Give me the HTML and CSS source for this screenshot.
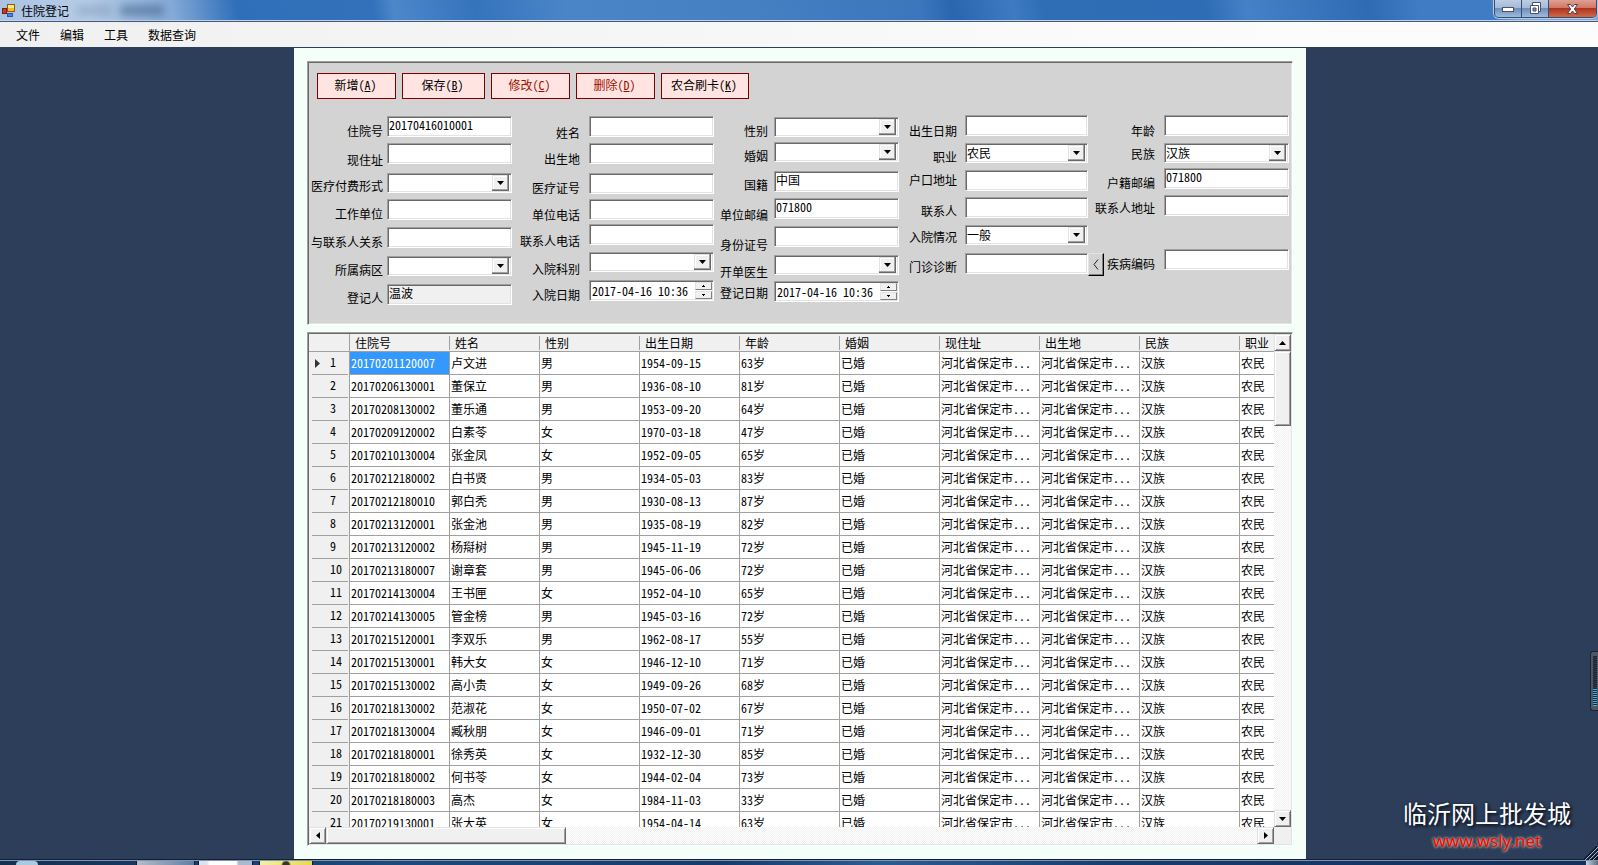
FILE: index.html
```html
<!DOCTYPE html>
<html lang="zh-CN">
<head>
<meta charset="utf-8">
<title>住院登记</title>
<link rel="stylesheet" href="styles.css">
</head>
<body>
<header class="titlebar">
  <svg class="app-icon" width="14" height="14" viewBox="0 0 14 14" aria-hidden="true">
    <rect x="5.500" y="0.500" width="7" height="7" fill="#f7b924" stroke="#8d5b0c"/>
    <path d="M6 1h6v3H6z" fill="#fde08a"/>
    <rect x="0.500" y="4.500" width="4" height="5" fill="#c93a22" stroke="#7d1c10"/>
    <rect x="5.500" y="9.500" width="5" height="3" fill="#4f83dc" stroke="#2a56a8"/>
  </svg>
  <h1 class="title">住院登记</h1>
  <span class="ghost ghost-a"></span><span class="ghost ghost-b"></span>
  <div class="window-buttons">
    <button class="win" aria-label="最小化"><svg width="14" height="8" viewBox="0 0 14 8"><rect x="1.500" y="2.500" width="11" height="4" fill="#fff" stroke="#4b5468"/></svg></button>
    <button class="win" aria-label="还原"><svg width="13" height="13" viewBox="0 0 13 13"><path d="M3.500 .5h8v9h-8z" fill="#fff" stroke="#4b5468"/><path d="M1.500 3.500h8v8h-8z" fill="#fff" stroke="#4b5468"/><path d="M4 6h3v3H4z" fill="#6f8fb8" stroke="#4b5468"/></svg></button>
    <button class="win close" aria-label="关闭"><svg width="13" height="12" viewBox="0 0 13 12"><path d="M1.500 1.500h3l2 2.500 2-2.500h3L8.300 6l3.200 4.500h-3l-2-2.500-2 2.500h-3L4.700 6z" fill="#fff" stroke="#4b4450"/></svg></button>
  </div>
</header>
<nav class="menubar">
  <button>文件</button><button>编辑</button><button>工具</button><button>数据查询</button>
</nav>
<main class="workarea">
  <div class="page">
    <form class="panel">
      <div class="actions">
        <button type="button" class="act">新增(<u>A</u>)</button>
        <button type="button" class="act wide">保存(<u>B</u>)</button>
        <button type="button" class="act" disabled>修改(<u>C</u>)</button>
        <button type="button" class="act" disabled>删除(<u>D</u>)</button>
        <button type="button" class="act wider">农合刷卡(<u>K</u>)</button>
      </div>
      <div class="fields">
        <div class="labels l1">
          <label for="a1">住院号</label><label for="a2">现住址</label><label for="a3">医疗付费形式</label><label for="a4">工作单位</label><label for="a5">与联系人关系</label><label for="a6">所属病区</label><label for="a7">登记人</label>
        </div>
        <div class="controls c1">
          <input id="a1" value="20170416010001"><input id="a2"><select id="a3"><option></option></select><input id="a4"><input id="a5"><select id="a6"><option></option></select><input id="a7" value="温波" readonly>
        </div>
        <div class="labels l2">
          <label for="b1">姓名</label><label for="b2">出生地</label><label for="b3">医疗证号</label><label for="b4">单位电话</label><label for="b5">联系人电话</label><label for="b6">入院科别</label><label for="b7">入院日期</label>
        </div>
        <div class="controls c2">
          <input id="b1"><input id="b2"><input id="b3"><input id="b4"><input id="b5"><select id="b6"><option></option></select>
          <div class="spin"><input id="b7" value="2017-04-16 10:36"><div class="spin-buttons"><button type="button" class="up" aria-label="增加"></button><button type="button" class="down" aria-label="减少"></button></div></div>
        </div>
        <div class="labels l3">
          <label for="c1">性别</label><label for="c2">婚姻</label><label for="c3">国籍</label><label for="c4">单位邮编</label><label for="c5">身份证号</label><label for="c6">开单医生</label><label for="c7">登记日期</label>
        </div>
        <div class="controls c3">
          <select id="c1"><option></option></select><select id="c2"><option></option></select><input id="c3" value="中国"><input id="c4" value="071800"><input id="c5"><select id="c6"><option></option></select>
          <div class="spin"><input id="c7" value="2017-04-16 10:36"><div class="spin-buttons"><button type="button" class="up" aria-label="增加"></button><button type="button" class="down" aria-label="减少"></button></div></div>
        </div>
        <div class="labels l4">
          <label for="d1">出生日期</label><label for="d2">职业</label><label for="d3">户口地址</label><label for="d4">联系人</label><label for="d5">入院情况</label><label for="d6">门诊诊断</label>
        </div>
        <div class="controls c4">
          <input id="d1"><select id="d2"><option>农民</option></select><input id="d3"><input id="d4"><select id="d5"><option>一般</option></select>
          <div class="lookup"><input id="d6"><button type="button" aria-label="选择诊断"><svg width="6" height="11" viewBox="0 0 6 11"><path d="M5 .5l-4 5 4 5" fill="none" stroke="#222"/></svg></button></div>
        </div>
        <div class="labels l5">
          <label for="e1">年龄</label><label for="e2">民族</label><label for="e3">户籍邮编</label><label for="e4">联系人地址</label><label for="e5">疾病编码</label>
        </div>
        <div class="controls c5">
          <input id="e1"><select id="e2"><option>汉族</option></select><input id="e3" value="071800"><input id="e4"><input id="e5">
        </div>
      </div>
    </form>
    <section class="grid">
      <div class="viewport">
        <table>
          <colgroup><col class="w-head"><col class="w"><col class="w-name"><col class="w"><col class="w"><col class="w"><col class="w"><col class="w"><col class="w"><col class="w"><col class="w"></colgroup>
          <thead><tr><th></th><th><span>住院号</span></th><th><span>姓名</span></th><th><span>性别</span></th><th><span>出生日期</span></th><th><span>年龄</span></th><th><span>婚姻</span></th><th><span>现住址</span></th><th><span>出生地</span></th><th><span>民族</span></th><th><span>职业</span></th></tr></thead>
          <tbody>
<tr class="current"><th>1</th><td>20170201120007</td><td>卢文进</td><td>男</td><td>1954-09-15</td><td>63岁</td><td>已婚</td><td>河北省保定市...</td><td>河北省保定市...</td><td>汉族</td><td>农民</td></tr>
<tr><th>2</th><td>20170206130001</td><td>董保立</td><td>男</td><td>1936-08-10</td><td>81岁</td><td>已婚</td><td>河北省保定市...</td><td>河北省保定市...</td><td>汉族</td><td>农民</td></tr>
<tr><th>3</th><td>20170208130002</td><td>董乐通</td><td>男</td><td>1953-09-20</td><td>64岁</td><td>已婚</td><td>河北省保定市...</td><td>河北省保定市...</td><td>汉族</td><td>农民</td></tr>
<tr><th>4</th><td>20170209120002</td><td>白素苓</td><td>女</td><td>1970-03-18</td><td>47岁</td><td>已婚</td><td>河北省保定市...</td><td>河北省保定市...</td><td>汉族</td><td>农民</td></tr>
<tr><th>5</th><td>20170210130004</td><td>张金凤</td><td>女</td><td>1952-09-05</td><td>65岁</td><td>已婚</td><td>河北省保定市...</td><td>河北省保定市...</td><td>汉族</td><td>农民</td></tr>
<tr><th>6</th><td>20170212180002</td><td>白书贤</td><td>男</td><td>1934-05-03</td><td>83岁</td><td>已婚</td><td>河北省保定市...</td><td>河北省保定市...</td><td>汉族</td><td>农民</td></tr>
<tr><th>7</th><td>20170212180010</td><td>郭白秃</td><td>男</td><td>1930-08-13</td><td>87岁</td><td>已婚</td><td>河北省保定市...</td><td>河北省保定市...</td><td>汉族</td><td>农民</td></tr>
<tr><th>8</th><td>20170213120001</td><td>张金池</td><td>男</td><td>1935-08-19</td><td>82岁</td><td>已婚</td><td>河北省保定市...</td><td>河北省保定市...</td><td>汉族</td><td>农民</td></tr>
<tr><th>9</th><td>20170213120002</td><td>杨搿树</td><td>男</td><td>1945-11-19</td><td>72岁</td><td>已婚</td><td>河北省保定市...</td><td>河北省保定市...</td><td>汉族</td><td>农民</td></tr>
<tr><th>10</th><td>20170213180007</td><td>谢章套</td><td>男</td><td>1945-06-06</td><td>72岁</td><td>已婚</td><td>河北省保定市...</td><td>河北省保定市...</td><td>汉族</td><td>农民</td></tr>
<tr><th>11</th><td>20170214130004</td><td>王书匣</td><td>女</td><td>1952-04-10</td><td>65岁</td><td>已婚</td><td>河北省保定市...</td><td>河北省保定市...</td><td>汉族</td><td>农民</td></tr>
<tr><th>12</th><td>20170214130005</td><td>管金榜</td><td>男</td><td>1945-03-16</td><td>72岁</td><td>已婚</td><td>河北省保定市...</td><td>河北省保定市...</td><td>汉族</td><td>农民</td></tr>
<tr><th>13</th><td>20170215120001</td><td>李双乐</td><td>男</td><td>1962-08-17</td><td>55岁</td><td>已婚</td><td>河北省保定市...</td><td>河北省保定市...</td><td>汉族</td><td>农民</td></tr>
<tr><th>14</th><td>20170215130001</td><td>韩大女</td><td>女</td><td>1946-12-10</td><td>71岁</td><td>已婚</td><td>河北省保定市...</td><td>河北省保定市...</td><td>汉族</td><td>农民</td></tr>
<tr><th>15</th><td>20170215130002</td><td>高小贵</td><td>女</td><td>1949-09-26</td><td>68岁</td><td>已婚</td><td>河北省保定市...</td><td>河北省保定市...</td><td>汉族</td><td>农民</td></tr>
<tr><th>16</th><td>20170218130002</td><td>范淑花</td><td>女</td><td>1950-07-02</td><td>67岁</td><td>已婚</td><td>河北省保定市...</td><td>河北省保定市...</td><td>汉族</td><td>农民</td></tr>
<tr><th>17</th><td>20170218130004</td><td>臧秋朋</td><td>女</td><td>1946-09-01</td><td>71岁</td><td>已婚</td><td>河北省保定市...</td><td>河北省保定市...</td><td>汉族</td><td>农民</td></tr>
<tr><th>18</th><td>20170218180001</td><td>徐秀英</td><td>女</td><td>1932-12-30</td><td>85岁</td><td>已婚</td><td>河北省保定市...</td><td>河北省保定市...</td><td>汉族</td><td>农民</td></tr>
<tr><th>19</th><td>20170218180002</td><td>何书苓</td><td>女</td><td>1944-02-04</td><td>73岁</td><td>已婚</td><td>河北省保定市...</td><td>河北省保定市...</td><td>汉族</td><td>农民</td></tr>
<tr><th>20</th><td>20170218180003</td><td>高杰</td><td>女</td><td>1984-11-03</td><td>33岁</td><td>已婚</td><td>河北省保定市...</td><td>河北省保定市...</td><td>汉族</td><td>农民</td></tr>
<tr><th>21</th><td>20170219130001</td><td>张大英</td><td>女</td><td>1954-04-14</td><td>63岁</td><td>已婚</td><td>河北省保定市...</td><td>河北省保定市...</td><td>汉族</td><td>农民</td></tr>
          </tbody>
        </table>
      </div>
      <div class="scroll vertical">
        <button class="arrow" aria-label="向上"><svg width="7" height="4" viewBox="0 0 7 4"><path d="M0 4L3.500 0 7 4z"/></svg></button>
        <div class="thumb"></div>
        <button class="arrow last" aria-label="向下"><svg width="7" height="4" viewBox="0 0 7 4"><path d="M0 0L3.500 4 7 0z"/></svg></button>
      </div>
      <div class="scroll horizontal">
        <button class="arrow" aria-label="向左"><svg width="4" height="7" viewBox="0 0 4 7"><path d="M4 0L0 3.500 4 7z"/></svg></button>
        <div class="thumb"></div>
        <button class="arrow last" aria-label="向右"><svg width="4" height="7" viewBox="0 0 4 7"><path d="M0 0L4 3.500 0 7z"/></svg></button>
      </div>
      <div class="corner"></div>
    </section>
  </div>
</main>
<footer class="taskbar">
  <span class="orb"></span><span class="task"></span><span class="task light"></span><span class="task yellow"></span><span class="desk"></span>
</footer>
<div class="gauge"><span></span></div>
<div class="watermark">
  <p class="mark-name">临沂网上批发城</p>
  <p class="mark-url">www.wsly.net</p>
</div>
<svg class="grip" width="14" height="14" viewBox="0 0 14 14" aria-hidden="true"><path d="M0 14L14 0M4 14L14 4M8 14L14 8M11 14l3-3" stroke="#10182a" stroke-width="2"/><path d="M1 14L14 1M5 14l9-9M9 14l5-5" stroke="#9fb0cc"/></svg>
</body>
</html>
```
FILE: styles.css
```css
* { box-sizing: border-box; }

body {
  margin: 0;
  height: 100vh;
  display: flex;
  flex-direction: column;
  overflow: hidden;
  background: #2d3e5a;
  color: #000;
  font: 12px/16px "Noto Sans Mono CJK SC", "Noto Sans CJK SC", sans-serif;
}

button, input, select {
  font: inherit;
  color: inherit;
  margin: 0;
  padding: 0;
  border-radius: 0;
}

/* Window frame */
.titlebar {
  flex: none;
  position: relative;
  display: flex;
  align-items: center;
  height: 22px;
  padding-left: 2px;
  border-bottom: 1px solid #46587a;
  box-shadow: inset 0 -1px #c0d4ec;
  background: linear-gradient(80deg, #a9c3e2 0, #b7cce6 90px, #86abd8 170px, #2f6fb9 235px, #3371ba 370px, #4c87c9 390px, #3573bb 470px, #4a85c7 560px, #4580c3 740px, #3b76bb 910px, #2a66af 940px, #3d7ac0 1000px, #2f6db5 1030px, #2e6cb5 1190px, #4581c5 1230px, #2f6bb3 1350px, #3f7cc3 1400px, #3f7cc3 1470px, #7fa7d6 1500px);
}
.app-icon { flex: none; margin-right: 5px; }
.title { margin: 0; font: 12px/16px "Noto Sans CJK SC", sans-serif; }
.ghost { height: 11px; background: #31557f; filter: blur(4px); opacity: .5; }
.ghost-a { width: 35px; margin-left: 8px; opacity: .2; }
.ghost-b { width: 44px; margin-left: 8px; }
.window-buttons {
  align-self: flex-start;
  display: flex;
  margin-left: auto;
  margin-right: 1px;
  border: 1px solid #3a4c6c;
  border-top: 0;
  border-radius: 0 0 5px 5px;
  overflow: hidden;
  box-shadow: 0 0 0 1px #b4cbe8;
}
.win {
  display: grid;
  place-items: center;
  width: 27px;
  height: 17px;
  border: 0;
  border-right: 1px solid #3a4c6c;
  background: linear-gradient(#bccde3 0, #a3b9d6 48%, #6e8fba 50%, #9dbbdd 100%);
}
.close { width: 47px; border-right: 0; background: linear-gradient(#dfa093 0, #cf7564 48%, #b03320 50%, #cf6a45 100%); }
.menubar {
  flex: none;
  display: flex;
  gap: 20px;
  height: 25px;
  padding: 0 16px;
  background: linear-gradient(90deg, #f0f0f0, #fcfcfc 80%);
}
.menubar button { border: 0; background: none; font-family: "Noto Sans CJK SC", sans-serif; }

.workarea {
  flex: 1;
  min-height: 0;
  display: grid;
  grid-template-columns: 294fr minmax(0, 1012fr) 292fr;
  grid-template-rows: minmax(0, 1fr);
  padding: 1px 0;
}
.page {
  grid-column: 2;
  display: flex;
  flex-direction: column;
  gap: 7px;
  padding: 13px;
  background: #f5fffa;
}

/* Sunken edges */
.panel, .grid, .controls input, select, .spin {
  border: 1px solid;
  border-color: #a0a0a0 #fff #fff #a0a0a0;
  box-shadow: inset 1px 1px #696969, inset -1px -1px #e3e3e3;
}

/* Registration form */
.panel { flex: none; padding: 11px 3px 18px 1px; background: #d3d3d3; }
.actions { display: flex; gap: 6px; padding-left: 8px; margin-bottom: 16px; }
.act {
  width: 79px;
  height: 26px;
  padding: 0 2px 2px 0;
  border: 1px solid #800000;
  background: #ffe4e1;
}
.act.wide { width: 83px; }
.act.wider { width: 88px; }
.act:disabled { color: #a01000; }

.fields {
  display: grid;
  grid-template-columns: 78fr 125fr 77fr 125fr 60fr 125fr 66fr 123fr 76fr 125fr;
}
.labels, .controls { display: grid; align-items: start; align-content: start; min-width: 0; }
.labels { justify-items: end; padding-top: 8px; white-space: nowrap; }
.l1 { grid-template-rows: 29px 26px 28px 28px 28px 28px 16px; padding-right: 4px; }
.l2 { grid-template-rows: 26px 29px 27px 26px 28px 26px 16px; padding-top: 10px; padding-right: 9px; }
.l3 { grid-template-rows: 25px 29px 30px 30px 27px 21px 16px; padding-right: 6px; }
.l4 { grid-template-rows: 26px 23px 31px 26px 30px 16px; padding-right: 8px; }
.l5 { grid-template-rows: 23px 29px 25px 56px 16px; padding-right: 9px; }
.c1 { grid-template-rows: 27px 30px 26px 28px 29px 28px 21px; padding-top: 1px; }
.c2 { grid-template-rows: 27px 30px 26px 25px 28px 28px 21px; padding-top: 1px; }
.c3 { grid-template-rows: 25px 29px 27px 28px 29px 26px 21px; padding-top: 2px; }
.c4 { grid-template-rows: 28px 27px 27px 28px 28px 23px; }
.c5 { grid-template-rows: 28px 25px 27px 54px 21px; }

.controls input {
  width: 100%;
  min-width: 0;
  height: 21px;
  padding: 0 1px 4px;
  background: #fff;
}
.controls input[readonly] { background: #f0f0f0; }
select {
  appearance: none;
  width: 100%;
  height: 20px;
  padding: 0 20px 0 1px;
  background: #fff url("data:image/svg+xml,%3Csvg xmlns='http://www.w3.org/2000/svg' width='17' height='16'%3E%3Cpath d='M0 0h17v16H0z' fill='%23696969'/%3E%3Cpath d='M0 0h16v15H0z' fill='%23a0a0a0'/%3E%3Cpath d='M0 0h15v14H0z' fill='%23e3e3e3'/%3E%3Cpath d='M1 1h14v13H1z' fill='%23fff'/%3E%3Cpath d='M2 2h13v12H2z' fill='%23f0f0f0'/%3E%3Cpath d='M5 6h7L8.500 10z'/%3E%3C/svg%3E") no-repeat right 2px top 1px;
}
.spin { display: flex; height: 21px; padding: 1px; background: #fff; }
.controls .spin input { flex: 1; height: 17px; padding: 0 1px 1px; border: 0; box-shadow: none; }
.spin-buttons { display: flex; flex-direction: column; gap: 1px; width: 17px; }
.spin-buttons button {
  flex: 1;
  border: 1px solid;
  border-color: #e3e3e3 #808080 #808080 #e3e3e3;
  background: #f0f0f0 no-repeat center;
}
.spin-buttons .up { background-image: url("data:image/svg+xml,%3Csvg xmlns='http://www.w3.org/2000/svg' width='3' height='2'%3E%3Cpath d='M1 0h1v1h1v1H0V1h1z'/%3E%3C/svg%3E"); }
.spin-buttons .down { background-image: url("data:image/svg+xml,%3Csvg xmlns='http://www.w3.org/2000/svg' width='3' height='2'%3E%3Cpath d='M0 0h3v1H2v1H1V1H0z'/%3E%3C/svg%3E"); }
.lookup { display: flex; }
.controls .lookup input { flex: none; }
.lookup button {
  flex: none;
  display: grid;
  place-items: center;
  width: 16px;
  height: 23px;
  border: 1px solid;
  border-color: #e3e3e3 #000 #000 #e3e3e3;
  box-shadow: inset -1px -1px #808080;
  background: #d3d3d3;
}

/* Patient table */
.grid {
  flex: 1;
  min-height: 0;
  display: grid;
  grid-template: minmax(0, 1fr) 17px / minmax(0, 1fr) 17px;
  padding: 1px;
  background: #f0f0f0;
}
.viewport { overflow: hidden; }
table { table-layout: fixed; width: 1031px; border-collapse: separate; border-spacing: 0; }
.w-head { width: 41px; }
.w { width: 100px; }
.w-name { width: 90px; }
th, td { padding: 0; text-align: left; font-weight: normal; white-space: nowrap; overflow: hidden; }
thead th { height: 18px; border-bottom: 1px solid #a0a0a0; background: #f0f0f0; }
thead th:first-child { border-right: 1px solid #a0a0a0; }
thead span { display: block; height: 14px; padding-left: 5px; line-height: 14px; border-right: 1px solid #a0a0a0; }
tbody th, td { height: 23px; line-height: 20px; border-right: 1px solid #a0a0a0; }
td { padding-left: 1px; border-bottom: 1px solid #a0a0a0; background: #fff; }
tbody th {
  padding: 0 0 3px 21px;
  background: linear-gradient(#a0a0a0, #a0a0a0) no-repeat 3px 100% / 36px 1px #f0f0f0;
}
.current th {
  background:
    linear-gradient(#a0a0a0, #a0a0a0) no-repeat 3px 100% / 36px 1px,
    url("data:image/svg+xml,%3Csvg xmlns='http://www.w3.org/2000/svg' width='5' height='9'%3E%3Cpath d='M0 0l5 4.500L0 9z' fill='%23333'/%3E%3C/svg%3E") no-repeat 6px 7px #f0f0f0;
}
.current td:nth-child(2) { background: #3399ff; color: #fff; }

.scroll { display: flex; background: repeating-conic-gradient(#f0f0f0 0 25%, #fff 0 50%) 0 0 / 2px 2px; }
.vertical { flex-direction: column; }
.arrow, .thumb {
  flex: none;
  border: 1px solid;
  border-color: #e3e3e3 #696969 #696969 #e3e3e3;
  box-shadow: inset 1px 1px #fff, inset -1px -1px #a0a0a0;
  background: #f0f0f0;
}
.arrow { display: grid; place-items: center; width: 17px; height: 17px; }
.vertical .thumb { height: 75px; }
.horizontal .thumb { width: 240px; }
.vertical .last { margin-top: auto; }
.horizontal .last { margin-left: auto; }

/* Desktop edge */
.taskbar {
  flex: none;
  display: flex;
  height: 5px;
  border-top: 1px solid #7f95b4;
  box-shadow: 0 -1px #141f33;
  background: linear-gradient(90deg, #14304f, #1d4a7d 25%, #173a68 45%, #2b5c94 55%, #183c6b 70%, #14305a);
}
.orb { width: 22px; margin: 0 98px 0 16px; border-radius: 11px 11px 0 0; background: #a9cbe0; }
.task { width: 59px; margin-right: 3px; border: 1px solid #0f1d33; border-width: 0 1px; background: linear-gradient(90deg, #b5bcc6, #5e7fa6); }
.task.light { width: 55px; margin-right: 6px; background: linear-gradient(90deg, #dce3ec 15%, #fff 20%, #fff 70%, #a9b9cf 75%); }
.task.yellow { width: 54px; background: radial-gradient(circle at 50% 100%, #3a3520 3px, #0000 5px), linear-gradient(90deg, #f5f0a0, #e8d850); }
.desk { width: 12px; margin-left: auto; background: linear-gradient(90deg, #c8d2e0, #5d6b80); }

.gauge {
  position: absolute;
  top: 651px;
  right: 0;
  width: 8px;
  height: 60px;
  padding: 4px 1px 4px 2px;
  border: 1px solid #1b2434;
  border-right: 0;
  border-radius: 3px 0 0 3px;
  background: #4d5866;
}
.gauge span {
  display: block;
  height: 100%;
  background:
    repeating-linear-gradient(#1d2635 0 1px, #0000 1px 2px),
    linear-gradient(#2d3848 66%, #3bb4ea 66%);
}
.watermark { position: absolute; right: 27px; bottom: 13px; text-align: center; }
.watermark p { margin: 0; }
.mark-name { color: #fff; font: 24px/34px "Noto Sans CJK SC", sans-serif; text-shadow: 2px 2px 3px #0b1220, 0 0 3px #1a2233; }
.mark-url { color: #f00; font: 17px/22px "Noto Sans", "Open Sans", sans-serif; text-shadow: 0 0 3px #b9c4a8, 0 0 3px #b9c4a8; }
.grip { position: absolute; right: 0; bottom: 5px; }
```
